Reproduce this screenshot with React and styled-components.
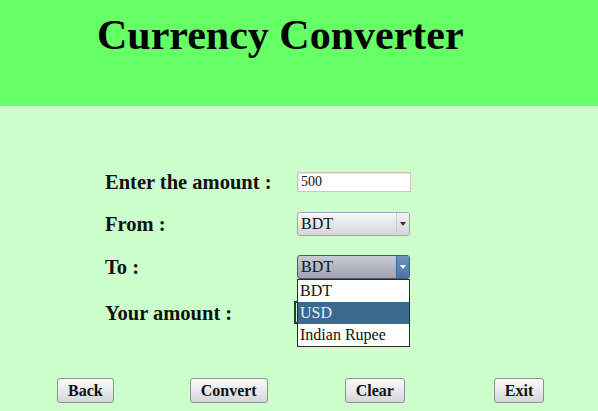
import styled, { createGlobalStyle } from 'styled-components'

const GlobalStyle = createGlobalStyle`
  html, body {
    margin: 0;
    padding: 0;
  }
  #root {
    width: 598px;
    height: 411px;
  }
`

const Frame = styled.div`
  width: 598px;
  height: 411px;
  display: flex;
  flex-direction: column;
  background: #ccffcc;
  font-family: 'Liberation Serif', 'Times New Roman', serif;
  color: #111;
`

const Header = styled.header`
  height: 106px;
  flex-shrink: 0;
  background: #66ff66;
  box-sizing: border-box;
  padding: 14px 0 0 97px;
`

const Title = styled.h1`
  margin: 0;
  font-size: 42px;
  line-height: 42px;
  font-weight: bold;
  color: #000;
`

const Form = styled.div`
  display: grid;
  grid-template-columns: 192px 1fr;
  grid-template-rows: 42px 42px 44px 48px;
  align-items: center;
  padding: 55px 0 0 105px;
`

const Label = styled.div`
  font-size: 20.5px;
  font-weight: bold;
  line-height: 24px;
`

const Field = styled.div`
  position: relative;
  display: flex;
  align-items: center;
`

const TextInput = styled.div`
  width: 114px;
  height: 20px;
  box-sizing: border-box;
  background: #fff;
  border: 1px solid #c6c6c6;
  box-shadow: inset 1px 1px 0 #e4e4e4;
  padding-left: 3px;
  font-size: 14px;
  line-height: 18px;
`

const Select = styled.div`
  width: 113px;
  height: 24px;
  box-sizing: border-box;
  display: flex;
  border-radius: 3px;
  overflow: hidden;
  border: 1px solid ${p => (p.$open ? '#4a5870' : '#a3a6b2')};
  background: ${p =>
    p.$open
      ? 'linear-gradient(#c9cbd3, #9fa3b0)'
      : 'linear-gradient(#f7f7f9, #d4d6dd)'};
`

const SelectValue = styled.span`
  flex: 1;
  padding-left: 3px;
  font-size: 16px;
  line-height: 22px;
`

const Arrow = styled.span`
  width: 12px;
  display: flex;
  align-items: center;
  justify-content: center;
  border-left: 1px solid ${p => (p.$open ? '#3f6a94' : '#c8cad3')};
  background: ${p =>
    p.$open
      ? 'linear-gradient(#6d93bd, #4a76a4)'
      : 'linear-gradient(#f2f3f6, #d2d5de)'};

  &::after {
    content: '';
    border-left: 3px solid transparent;
    border-right: 3px solid transparent;
    border-top: 4px solid ${p => (p.$open ? '#fff' : '#333')};
  }
`

const Popup = styled.ul`
  position: absolute;
  top: 24px;
  left: 0;
  z-index: 2;
  width: 113px;
  margin: 0;
  padding: 0;
  list-style: none;
  box-sizing: border-box;
  background: #fff;
  border: 1px solid #2a2a2a;
`

const Option = styled.li`
  height: 22px;
  padding-left: 2px;
  font-size: 16px;
  line-height: 22px;
  background: ${p => (p.$active ? '#3b6a8e' : '#fff')};
  color: ${p => (p.$active ? '#e6eef5' : '#111')};
`

const ResultBox = styled.div`
  width: 100px;
  height: 23px;
  margin-left: -3px;
  margin-top: -2px;
  box-sizing: border-box;
  border: 2px solid #2b3a2b;
`

const ButtonRow = styled.div`
  margin-top: auto;
  display: flex;
  align-items: center;
  padding: 0 0 8px 57px;
`

const Button = styled.button`
  height: 25px;
  margin-left: ${p => p.$offset || 0}px;
  padding: 0 10px;
  box-sizing: border-box;
  border: 1px solid #8e9096;
  border-radius: 3px;
  background: linear-gradient(#fbfbfc, #e6e7ea 55%, #d3d5da);
  font-family: 'Liberation Serif', 'Times New Roman', serif;
  font-size: 16px;
  font-weight: bold;
  color: #111;
  line-height: 22px;
`

const currencies = ['BDT', 'USD', 'Indian Rupee']

const App = () => {
  return (
    <Frame>
      <GlobalStyle />
      <Header>
        <Title>Currency Converter</Title>
      </Header>
      <Form>
        <Label>Enter the amount :</Label>
        <Field>
          <TextInput>500</TextInput>
        </Field>

        <Label>From :</Label>
        <Field>
          <Select>
            <SelectValue>BDT</SelectValue>
            <Arrow />
          </Select>
        </Field>

        <Label>To :</Label>
        <Field>
          <Select $open>
            <SelectValue>BDT</SelectValue>
            <Arrow $open />
          </Select>
          <Popup>
            {currencies.map(c => (
              <Option key={c} $active={c === 'USD'}>{c}</Option>
            ))}
          </Popup>
        </Field>

        <Label>Your amount :</Label>
        <Field>
          <ResultBox />
        </Field>
      </Form>
      <ButtonRow>
        <Button>Back</Button>
        <Button $offset={76}>Convert</Button>
        <Button $offset={77}>Clear</Button>
        <Button $offset={89}>Exit</Button>
      </ButtonRow>
    </Frame>
  )
}

export default App
